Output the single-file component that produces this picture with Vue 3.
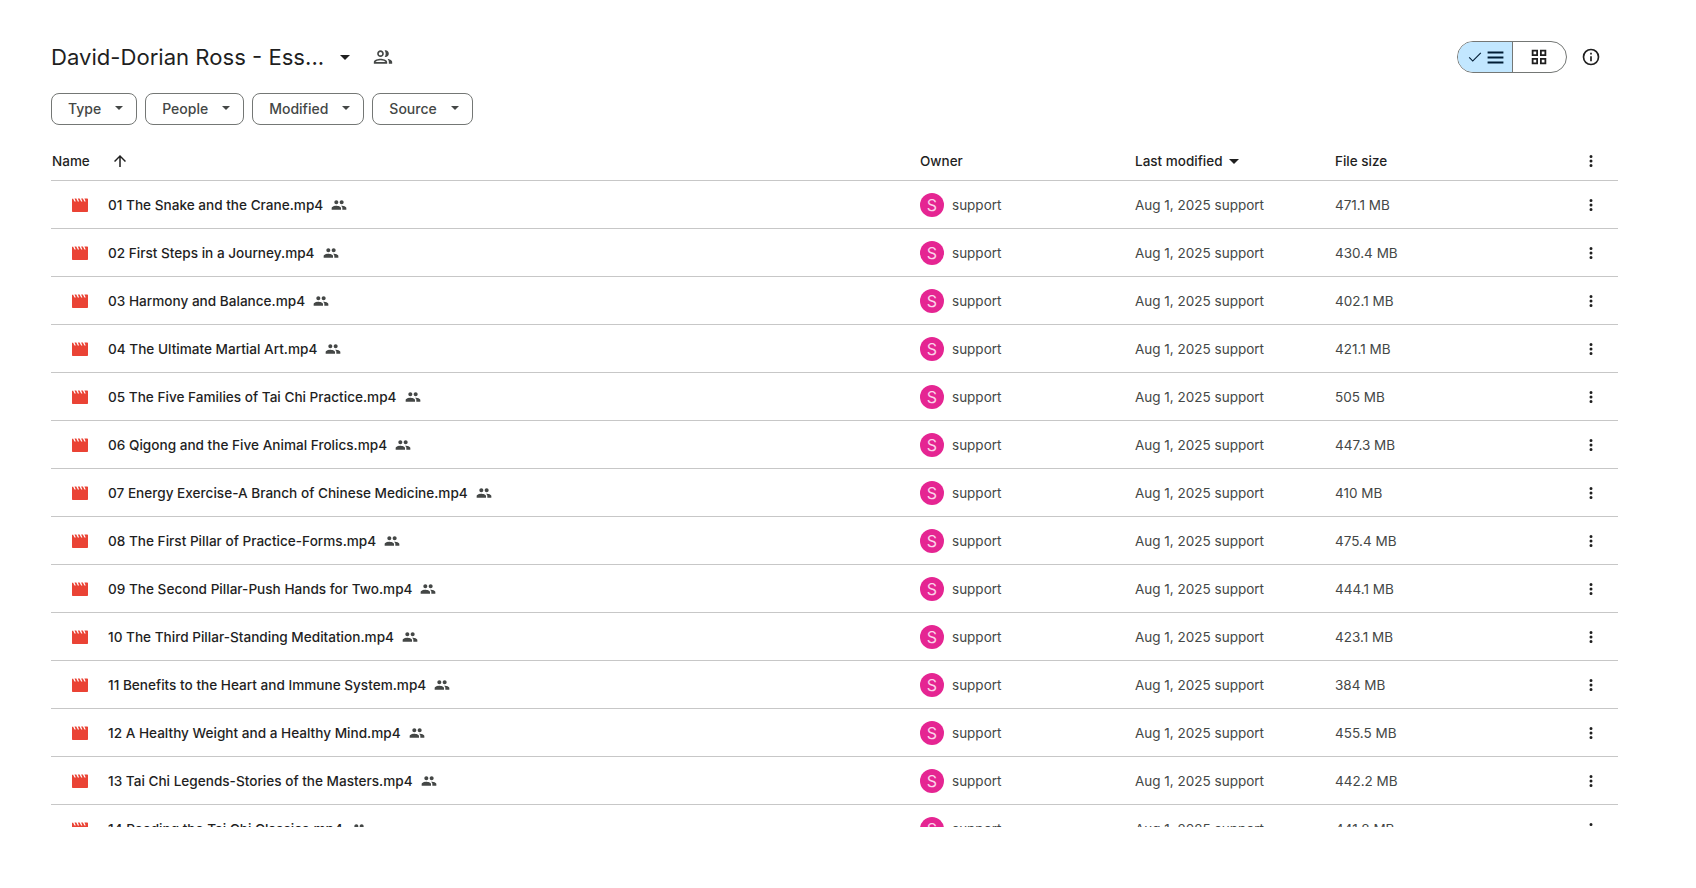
<script setup>
const files = [
  ['01 The Snake and the Crane.mp4', '471.1 MB'],
  ['02 First Steps in a Journey.mp4', '430.4 MB'],
  ['03 Harmony and Balance.mp4', '402.1 MB'],
  ['04 The Ultimate Martial Art.mp4', '421.1 MB'],
  ['05 The Five Families of Tai Chi Practice.mp4', '505 MB'],
  ['06 Qigong and the Five Animal Frolics.mp4', '447.3 MB'],
  ['07 Energy Exercise-A Branch of Chinese Medicine.mp4', '410 MB'],
  ['08 The First Pillar of Practice-Forms.mp4', '475.4 MB'],
  ['09 The Second Pillar-Push Hands for Two.mp4', '444.1 MB'],
  ['10 The Third Pillar-Standing Meditation.mp4', '423.1 MB'],
  ['11 Benefits to the Heart and Immune System.mp4', '384 MB'],
  ['12 A Healthy Weight and a Healthy Mind.mp4', '455.5 MB'],
  ['13 Tai Chi Legends-Stories of the Masters.mp4', '442.2 MB'],
  ['14 Reading the Tai Chi Classics.mp4', '441.8 MB'],
]
const filters = ['Type', 'People', 'Modified', 'Source']
</script>

<template>
  <div class="page">
    <header class="top">
      <div class="title-wrap">
        <h1 class="title">David-Dorian Ross - Ess...</h1>
        <span class="caret title-caret"></span>
        <svg class="shared-outline" viewBox="0 0 24 24" width="20" height="20">
          <path fill="#444746" d="M9 12c2.200 0 4-1.800 4-4s-1.800-4-4-4-4 1.800-4 4 1.800 4 4 4zm0-6c1.100 0 2 .9 2 2s-.9 2-2 2-2-.9-2-2 .9-2 2-2zm0 8c-2.700 0-8 1.300-8 4v2h16v-2c0-2.700-5.300-4-8-4zm-6 4c.2-.7 3.300-2 6-2s5.800 1.300 6 2H3zM15 4c-.4 0-.7.100-1 .200.800 1.100 1.200 2.400 1.200 3.800s-.4 2.700-1.200 3.800c.3.100.6.200 1 .200 2.200 0 4-1.800 4-4s-1.800-4-4-4zm2 10.100c1.200.9 2 2.100 2 3.900v2h4v-2c0-2.400-3.500-3.500-6-3.900z"/>
        </svg>
      </div>
      <div class="top-right">
        <div class="toggle">
          <div class="toggle-on">
            <svg viewBox="0 0 24 24" width="18" height="18"><path fill="#001d35" d="M9 16.200 4.800 12l-1.100 1.100L9 18.400 20.300 7.100 19.200 6z"/></svg>
            <svg viewBox="0 0 24 24" width="19" height="19"><path fill="#001d35" d="M2 19.500h20v-2.600H2v2.600zm0-6.200h20v-2.600H2v2.600zM2 4.500v2.600h20V4.500H2z"/></svg>
          </div>
          <div class="toggle-off">
            <svg viewBox="0 0 24 24" width="18" height="18"><path fill="none" stroke="#1f1f1f" stroke-width="2.400" d="M3.500 3.500h6v6h-6zM14.500 3.500h6v6h-6zM3.500 14.500h6v6h-6zM14.500 14.500h6v6h-6z"/></svg>
          </div>
        </div>
        <div class="icon-cell info">
          <svg viewBox="0 0 24 24" width="20" height="20"><path fill="#1f1f1f" d="M11 7h2v2h-2zm0 4h2v6h-2zm1-9a10 10 0 1 0 0 20 10 10 0 0 0 0-20zm0 18a8 8 0 1 1 0-16 8 8 0 0 1 0 16z"/></svg>
        </div>
      </div>
    </header>

    <div class="filters">
      <button v-for="f in filters" :key="f" class="chip">
        <span>{{ f }}</span>
        <span class="caret chip-caret"></span>
      </button>
    </div>

    <div class="list">
      <div class="row head">
        <div class="c-name head-name">
          <span>Name</span>
          <svg viewBox="0 0 24 24" width="18" height="18"><path fill="#1f1f1f" d="M4 12l1.400 1.400L11 7.800V20h2V7.800l5.600 5.600L20 12l-8-8z"/></svg>
        </div>
        <div>Owner</div>
        <div class="head-mod">Last modified <span class="caret head-caret"></span></div>
        <div>File size</div>
        <div class="icon-cell">
          <svg viewBox="0 0 24 24" width="18" height="18"><path fill="#1f1f1f" d="M12 8a2 2 0 1 0 0-4 2 2 0 0 0 0 4zm0 2a2 2 0 1 0 0 4 2 2 0 0 0 0-4zm0 6a2 2 0 1 0 0 4 2 2 0 0 0 0-4z"/></svg>
        </div>
      </div>

      <div v-for="file in files" :key="file[0]" class="row item">
        <div class="c-name name-cell">
          <svg class="film" viewBox="0 0 16 16" width="16" height="16">
            <path fill="#ea4335" d="M0 2 1 1.500 2.500 4.500h1.300L2.500 1.500h1.800L5.800 4.500h1.300L5.800 1.500h1.800L9.100 4.500h1.300L9.100 1.500h1.800L12.400 4.500h1.300L12.400 1.500H15c.6 0 1 .4 1 1V14c0 .6-.4 1-1 1H1c-.6 0-1-.4-1-1z"/>
          </svg>
          <span class="fname">{{ file[0] }}</span>
          <svg class="shared" viewBox="0 0 24 24" width="16" height="16">
            <path fill="#444746" d="M16 11c1.700 0 3-1.300 3-3s-1.300-3-3-3-3 1.300-3 3 1.300 3 3 3zm-8 0c1.700 0 3-1.300 3-3S9.700 5 8 5 5 6.300 5 8s1.300 3 3 3zm0 2c-2.300 0-7 1.200-7 3.500V19h14v-2.500C15 14.200 10.300 13 8 13zm8 0c-.3 0-.6 0-1 .100 1.200.8 2 2 2 3.400V19h6v-2.500c0-2.300-4.700-3.500-7-3.500z"/>
          </svg>
        </div>
        <div class="owner">
          <span class="avatar">S</span>
          <span>support</span>
        </div>
        <div>Aug 1, 2025 support</div>
        <div>{{ file[1] }}</div>
        <div class="icon-cell">
          <svg viewBox="0 0 24 24" width="18" height="18"><path fill="#1f1f1f" d="M12 8a2 2 0 1 0 0-4 2 2 0 0 0 0 4zm0 2a2 2 0 1 0 0 4 2 2 0 0 0 0-4zm0 6a2 2 0 1 0 0 4 2 2 0 0 0 0-4z"/></svg>
        </div>
      </div>
    </div>
  </div>
</template>

<style>
html, body { margin: 0; background: #fff; }
</style>

<style scoped>
.page {
  box-sizing: border-box;
  height: 827px;
  overflow: hidden;
  padding: 41px 78px 0 51px;
  font-family: Inter, Roboto, "Liberation Sans", sans-serif;
  color: #1f1f1f;
}
.top {
  display: flex;
  justify-content: space-between;
  align-items: center;
  height: 32px;
  padding-right: 15px;
}
.title-wrap { display: flex; align-items: center; }
.title {
  margin: 0;
  font-size: 22.100px;
  font-weight: 400;
  line-height: 32px;
  white-space: nowrap;
}
.caret {
  display: inline-block;
  width: 0;
  height: 0;
  border-left: 5px solid transparent;
  border-right: 5px solid transparent;
  border-top: 5px solid #1f1f1f;
}
.title-caret { margin-left: 16px; }
.shared-outline { margin-left: 23px; }
.top-right { display: flex; align-items: center; }
.toggle {
  box-sizing: border-box;
  display: flex;
  width: 110px;
  height: 32px;
  border: 1px solid #747775;
  border-radius: 16px;
  overflow: hidden;
}
.toggle-on {
  width: 55px;
  background: #c2e7ff;
  border-right: 1px solid #747775;
  display: flex;
  align-items: center;
  justify-content: center;
  padding-left: 1px;
  box-sizing: border-box;
}
.toggle-on svg:first-child { margin-right: 2px; }
.toggle-off {
  flex: 1;
  display: flex;
  align-items: center;
  justify-content: center;
  padding-right: 2px;
}
.info { margin-left: 12px; }
.icon-cell {
  width: 24px;
  display: flex;
  align-items: center;
  justify-content: center;
}
.filters {
  display: flex;
  gap: 8px;
  margin-top: 20px;
}
.chip {
  box-sizing: border-box;
  height: 32px;
  padding: 0 8px 2px 16px;
  display: flex;
  align-items: center;
  background: #fff;
  border: 1px solid #747775;
  border-radius: 8px;
  font-family: inherit;
  font-size: 14px;
  font-weight: 500;
  color: #444746;
}
.chip-caret {
  margin-left: 14px;
  margin-right: 5px;
  border-left-width: 4px;
  border-right-width: 4px;
  border-top: 4px solid #444746;
}
.list { margin-top: 13px; }
.row {
  display: grid;
  grid-template-columns: 869px 215px 200px 1fr 24px;
  align-items: center;
  box-sizing: border-box;
  height: 48px;
  border-bottom: 1px solid #c7c7c7;
  padding-right: 15px;
  font-size: 13.500px;
  color: #444746;
}
.head {
  height: 43px;
  padding-top: 3px;
  font-weight: 500;
  color: #1f1f1f;
}
.c-name { display: flex; align-items: center; }
.head-name { padding-left: 1px; }
.head-name svg { margin-left: 21px; }
.head-caret { margin-left: 3px; vertical-align: 2px; }
.name-cell { padding-left: 21px; }
.film { flex: none; }
.fname {
  margin-left: 20px;
  font-size: 13.600px;
  font-weight: 500;
  color: #1f1f1f;
  white-space: nowrap;
}
.shared { margin-left: 8px; flex: none; }
.owner { display: flex; align-items: center; }
.avatar {
  width: 24px;
  height: 24px;
  border-radius: 50%;
  background: #e52592;
  color: #fbd3e9;
  display: flex;
  align-items: center;
  justify-content: center;
  font-size: 16px;
  margin-right: 8px;
}
</style>
